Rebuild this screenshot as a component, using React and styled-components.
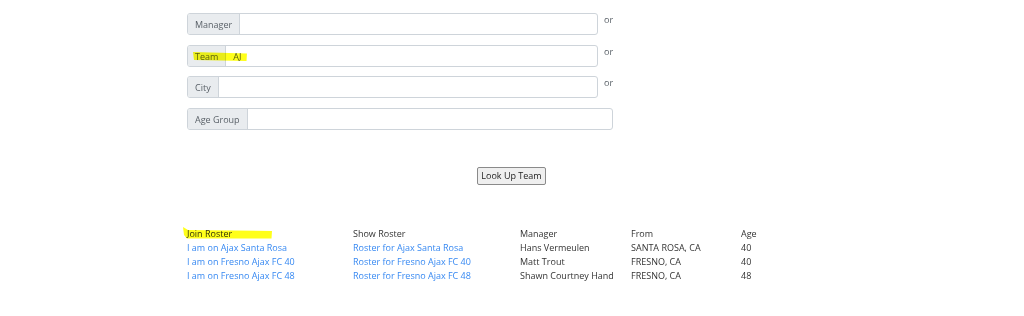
import React from 'react';
import styled, { createGlobalStyle } from 'styled-components';

const GlobalStyle = createGlobalStyle`
  html, body {
    margin: 0;
    padding: 0;
    background: #fff;
  }
  body {
    font-family: "Open Sans", "Noto Sans", sans-serif;
    color: #212529;
  }
`;

const Page = styled.div`
  width: 1024px;
  height: 316px;
  padding: 13px 0 0 187px;
  box-sizing: border-box;
  position: relative;
`;

const Form = styled.div`
  display: flex;
  flex-direction: column;
  gap: 9.5px;
`;

const FieldRow = styled.div`
  display: flex;
  align-items: flex-start;
  gap: 6px;
`;

const InputGroup = styled.div`
  display: flex;
  width: ${(p) => p.$width}px;
  height: 22px;
  border: 1px solid #ced4da;
  border-radius: 3px;
  box-sizing: border-box;
  overflow: hidden;
  background: #fff;
`;

const Addon = styled.span`
  display: flex;
  align-items: center;
  padding: 1px 7px 0;
  background: #e9ecef;
  border-right: 1px solid #ced4da;
  color: #5a6168;
  font-size: 9px;
  white-space: nowrap;
`;

const Field = styled.span`
  flex: 1;
  display: flex;
  align-items: center;
  padding: 1px 7px 0;
  color: #5a6168;
  font-size: 9px;
`;

const Or = styled.span`
  font-size: 9px;
  color: #5a6168;
  line-height: 14px;
`;

const ButtonRow = styled.div`
  display: flex;
  justify-content: center;
  width: 649px;
  margin-top: 37px;
`;

const Button = styled.button`
  font-family: "Open Sans", "Noto Sans", sans-serif;
  font-size: 9px;
  color: #222;
  background: #efefef;
  border: 1px solid #8a8a8a;
  border-radius: 2px;
  height: 18px;
  padding: 0 3px;
`;

const Table = styled.div`
  display: grid;
  grid-template-columns: 166px 167px 111px 110px 60px;
  margin-top: 42px;
  font-size: 9px;
  line-height: 14px;
`;

const Head = styled.div`
  color: #333;
`;

const Cell = styled.div`
  color: ${(p) => (p.$link ? '#3789f2' : '#333')};
  white-space: nowrap;
`;

const Highlight = styled.svg`
  position: absolute;
  pointer-events: none;
  mix-blend-mode: multiply;
`;

const rows = [
  ['Ajax Santa Rosa', 'Hans Vermeulen', 'SANTA ROSA, CA', '40'],
  ['Fresno Ajax FC 40', 'Matt Trout', 'FRESNO, CA', '40'],
  ['Fresno Ajax FC 48', 'Shawn Courtney Hand', 'FRESNO, CA', '48'],
];

const App = () => (
  <>
    <GlobalStyle />
    <Page>
      <Form>
        <FieldRow>
          <InputGroup $width={411}>
            <Addon>Manager</Addon>
            <Field />
          </InputGroup>
          <Or>or</Or>
        </FieldRow>
        <FieldRow>
          <InputGroup $width={411}>
            <Addon>Team</Addon>
            <Field>AJ</Field>
          </InputGroup>
          <Or>or</Or>
        </FieldRow>
        <FieldRow>
          <InputGroup $width={411}>
            <Addon>City</Addon>
            <Field />
          </InputGroup>
          <Or>or</Or>
        </FieldRow>
        <FieldRow>
          <InputGroup $width={426}>
            <Addon>Age Group</Addon>
            <Field />
          </InputGroup>
        </FieldRow>
      </Form>
      <ButtonRow>
        <Button>Look Up Team</Button>
      </ButtonRow>
      <Table>
        <Head>Join Roster</Head>
        <Head>Show Roster</Head>
        <Head>Manager</Head>
        <Head>From</Head>
        <Head>Age</Head>
        {rows.map(([team, manager, from, age]) => (
          <React.Fragment key={team}>
            <Cell $link>I am on {team}</Cell>
            <Cell $link>Roster for {team}</Cell>
            <Cell>{manager}</Cell>
            <Cell>{from}</Cell>
            <Cell>{age}</Cell>
          </React.Fragment>
        ))}
      </Table>
      <Highlight style={{ left: 191, top: 50 }} width="58" height="13" viewBox="0 0 58 13">
        <path d="M2 2 L56 3.5 L55.5 11 L3 10 Z" fill="#ffff1a" />
      </Highlight>
      <Highlight style={{ left: 182, top: 225 }} width="92" height="16" viewBox="0 0 92 16">
        <path d="M1 2 L6 5 L90 6 L89.5 13.5 L5 13.5 L2 10 Z" fill="#ffff1a" />
      </Highlight>
    </Page>
  </>
);

export default App;
